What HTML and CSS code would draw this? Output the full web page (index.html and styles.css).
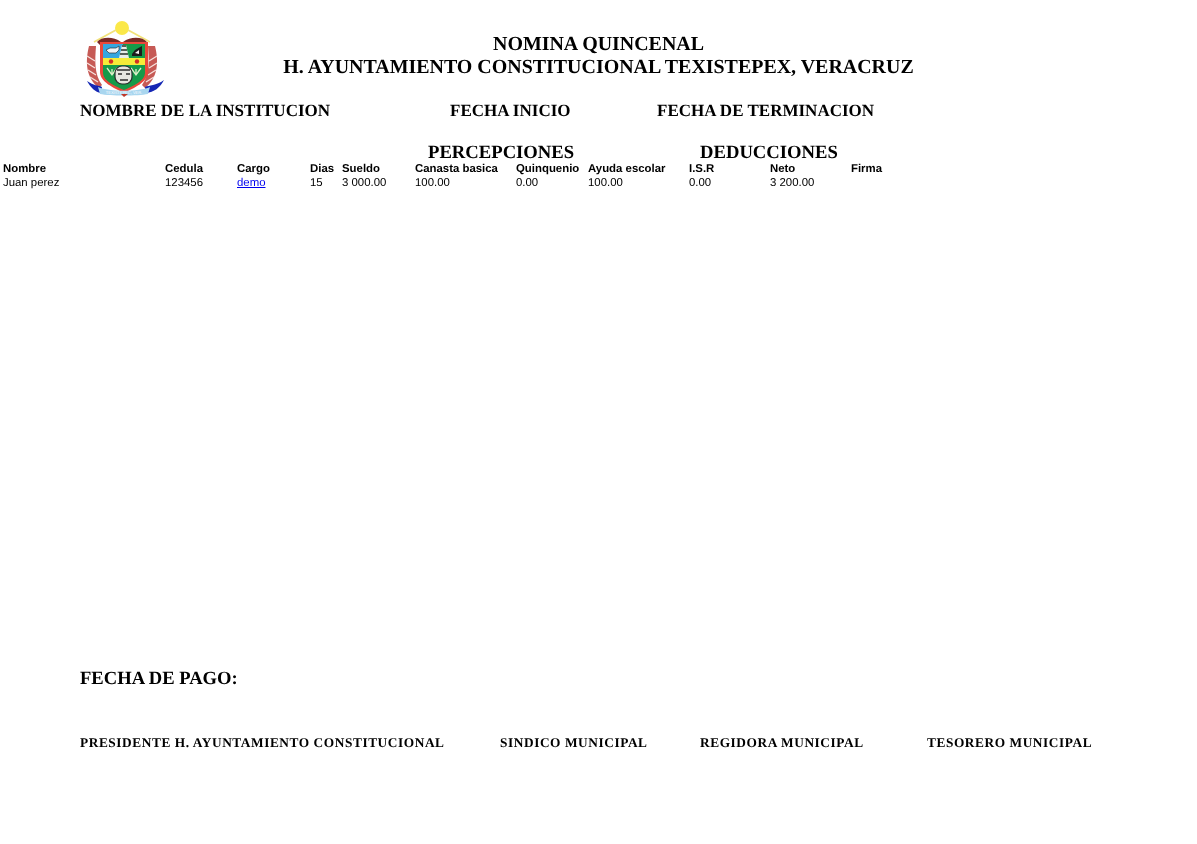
FILE: index.html
```html
<!DOCTYPE html>
<html lang="es">
<head>
<meta charset="utf-8">
<title>Nomina quincenal</title>
<link rel="stylesheet" href="styles.css">
</head>
<body>
<header class="top">
  <svg class="logo" viewBox="0 0 80 78" width="80" height="78" aria-hidden="true">
    <defs><filter id="soft" x="-5%" y="-5%" width="110%" height="110%"><feGaussianBlur stdDeviation="0.45"/></filter></defs>
    <g filter="url(#soft)">
      <circle cx="36" cy="8" r="7" fill="#fbe84a"/>
      <path d="M8 22 L30 10 M64 22 L42 10" stroke="#f2e27a" stroke-width="1.8" fill="none"/>
      <path d="M11 22 C15 17 27 16 35 22 L35 24 L14 25 Z M61 22 C57 17 45 16 37 22 L37 24 L58 25 Z" fill="#7a2a26"/>
      <path d="M3 26 C-1 42 0 58 13 68 L16 65 C8 54 9 40 10 26 Z" fill="#c65a55"/>
      <path d="M69 26 C73 42 72 58 59 68 L56 65 C64 54 63 40 62 26 Z" fill="#c65a55"/>
      <path d="M1 36 l8 5 M1 43 l8 5 M2 50 l8 5 M4 57 l8 5 M71 36 l-8 5 M71 43 l-8 5 M70 50 l-8 5 M68 57 l-8 5" stroke="#f7e2de" stroke-width="1.300"/>
      <path d="M14 22 H62 V52 C62 62 48 68 38 73 C28 68 14 62 14 52 Z" fill="#e8493b"/>
      <path d="M17 24 H37 V38 H17 Z" fill="#35a6de"/>
      <path d="M37 24 H59 V38 H37 Z" fill="#129a48"/>
      <path d="M17 38 H59 V45 H17 Z" fill="#f5ec38"/>
      <path d="M17 45 H59 V53 C59 61 47 66 38 70 C29 66 17 61 17 53 Z" fill="#129a48"/>
      <path d="M33 38 L36 25 H40 L43 38 Z" fill="#e8ece8"/>
      <path d="M34 34 h8 M35 30 h6 M36 26 h4" stroke="#26302a" stroke-width="1.300"/>
      <path d="M20 30 l4 -2 h6 l3 -2 v4 l-3 3 h-7 Z" fill="#eef3f6" stroke="#24323c" stroke-width=".7"/>
      <path d="M46 34 l3 -4 l7 -4 v10 h-10 Z" fill="#1a1a1a"/>
      <path d="M49 33 l4 -3 v4 Z" fill="#f3f3f3"/>
      <circle cx="25" cy="41.500" r="2.200" fill="#d42f28"/>
      <circle cx="51" cy="41.500" r="2.200" fill="#d42f28"/>
      <path d="M21 48 l5 7 l5 -7 M45 48 l5 7 l5 -7 M26 49 v6 M50 49 v6" stroke="#dcefc8" stroke-width="1.300" fill="none"/>
      <rect x="29" y="46" width="17" height="18" rx="7" fill="#e6e6e0" stroke="#2d2d2d" stroke-width="1.200"/>
      <path d="M32 54 h4 M40 54 h4 M34 60 h8 M31 50 h13" stroke="#2d2d2d" stroke-width="1.300"/>
      <path d="M1 61 C8 66 12 65 16 67 L15 73 C9 72 5 68 1 61 Z" fill="#1428b4"/>
      <path d="M78 60 C70 66 63 65 59 67 L60 73 C68 72 74 68 78 60 Z" fill="#1428b4"/>
      <path d="M12 67 C24 72 52 72 64 67 L62 74 C52 76 24 76 14 74 Z" fill="#a9d6ef"/>
      <path d="M35 74 H42 L38 77 Z" fill="#c0392b"/>
    </g>
    <text class="logo-text" x="38" y="73.500" text-anchor="middle">TEXISTEPEC, VER.</text>
  </svg>
  <div class="titles">
    <h1 class="title">NOMINA QUINCENAL</h1>
    <h1 class="title">H. AYUNTAMIENTO CONSTITUCIONAL TEXISTEPEX, VERACRUZ</h1>
  </div>
</header>
<div class="meta">
  <span class="meta-a">NOMBRE DE LA INSTITUCION</span>
  <span class="meta-b">FECHA INICIO</span>
  <span class="meta-c">FECHA DE TERMINACION</span>
</div>
<div class="groups">
  <span class="group-p">PERCEPCIONES</span>
  <span class="group-d">DEDUCCIONES</span>
</div>
<div class="table">
  <b>Nombre</b><b>Cedula</b><b>Cargo</b><b>Dias</b><b>Sueldo</b><b>Canasta basica</b><b>Quinquenio</b><b>Ayuda escolar</b><b>I.S.R</b><b>Neto</b><b>Firma</b>
  <span>Juan perez</span><span>123456</span><span><a href="#">demo</a></span><span>15</span><span>3 000.00</span><span>100.00</span><span>0.00</span><span>100.00</span><span>0.00</span><span>3 200.00</span><span></span>
</div>
<div class="pago">FECHA DE PAGO:</div>
<div class="firmas">
  <span class="f1">PRESIDENTE H. AYUNTAMIENTO CONSTITUCIONAL</span>
  <span class="f2">SINDICO MUNICIPAL</span>
  <span class="f3">REGIDORA MUNICIPAL</span>
  <span class="f4">TESORERO MUNICIPAL</span>
</div>
</body>
</html>
```
FILE: styles.css
```css
html, body { margin: 0; padding: 0; background: #fff; }
body { width: 1197px; height: 844px; overflow: hidden; color: #000; font-family: "Liberation Serif", serif; text-rendering: geometricPrecision; }
.top { display: flex; height: 98px; padding-left: 86px; box-sizing: border-box; padding-top: 20px; }
.logo { flex: none; }
.logo-text { font-family: "Liberation Sans", sans-serif; font-size: 4px; fill: #fff; }
.titles { width: 865px; padding-top: 13px; box-sizing: border-box; will-change: opacity; }
.title { margin: 0; font-size: 19.95px; line-height: 23px; font-weight: bold; text-align: center; }
.meta { display: flex; padding-left: 80px; height: 36px; font-size: 17.03px; font-weight: bold; line-height: 25px; will-change: opacity; }
.meta-a { width: 370px; }
.meta-b { width: 207px; }
.groups { display: flex; padding-left: 428px; font-size: 18.67px; font-weight: bold; line-height: 22px; height: 22px; margin-top: 8px; will-change: opacity; }
.group-p { width: 272px; }
.table { display: grid; grid-template-columns: 162px 72px 73px 32px 73px 101px 72px 101px 81px 81px 100px; margin-top: -2px; padding-left: 3px; font-family: "Liberation Sans", sans-serif; font-size: 11.4px; line-height: 14px; will-change: opacity; }
.table b { white-space: nowrap; }
.table a { color: #00e; }
.pago { margin-top: 477px; padding-left: 80px; font-size: 18.6px; font-weight: bold; line-height: 24px; will-change: opacity; }
.firmas { display: flex; margin-top: 43px; padding-left: 80px; font-size: 13.33px; letter-spacing: .57px; font-weight: bold; line-height: 18px; white-space: nowrap; will-change: opacity; }
.f1 { width: 420px; }
.f2 { width: 200px; }
.f3 { width: 227px; }
```
